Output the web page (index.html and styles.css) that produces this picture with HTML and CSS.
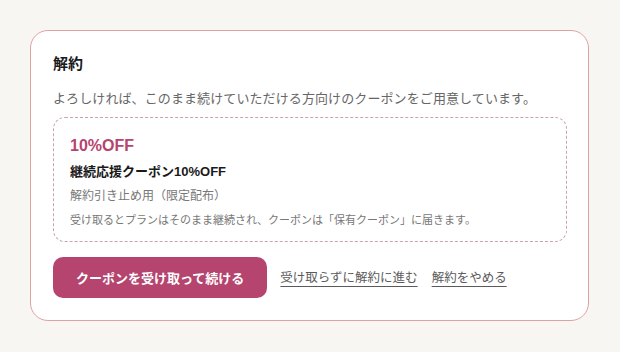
FILE: index.html
```html
<!DOCTYPE html>
<html lang="ja">
<head>
<meta charset="utf-8">
<link rel="stylesheet" href="styles.css">
</head>
<body>
<div class="card">
  <h2 class="title">解約</h2>
  <p class="lead">よろしければ、このまま続けていただける方向けのクーポンをご用意しています。</p>
  <div class="coupon">
    <div class="coupon-off">10%OFF</div>
    <div class="coupon-name">継続応援クーポン10%OFF</div>
    <div class="coupon-sub">解約引き止め用（限定配布）</div>
    <div class="coupon-note">受け取るとプランはそのまま継続され、クーポンは「保有クーポン」に届きます。</div>
  </div>
  <div class="actions">
    <button class="primary">クーポンを受け取って続ける</button>
    <a class="link" href="#">受け取らずに解約に進む</a>
    <a class="link" href="#">解約をやめる</a>
  </div>
</div>
</body>
</html>
```
FILE: styles.css
```css
html, body {
  margin: 0;
  padding: 0;
  background: #f8f6f2;
}
body {
  padding: 30px 31px 30px 30px;
  font-family: "Liberation Sans", "Noto Sans CJK JP", sans-serif;
  color: #222;
}
.card {
  background: #fff;
  border: 1px solid #dea2a2;
  border-radius: 18px;
  padding: 22px 21px 22px 22px;
}
.title {
  margin: 0;
  font-size: 15px;
  line-height: 22px;
  font-weight: 700;
  color: #1a1a1a;
}
.lead {
  margin: 13px 0 0;
  font-size: 13px;
  line-height: 22px;
  color: #666;
  letter-spacing: 0.1px;
}
.coupon {
  margin-top: 7px;
  border: 1px dashed #c9a0b4;
  border-radius: 12px;
  padding: 16px 16px 12px;
}
.coupon-off {
  font-size: 16px;
  line-height: 24px;
  font-weight: 700;
  color: #b5446e;
}
.coupon-name {
  margin-top: 4px;
  font-size: 13px;
  line-height: 20px;
  font-weight: 700;
  color: #1a1a1a;
}
.coupon-sub {
  margin-top: 4px;
  font-size: 12px;
  line-height: 20px;
  color: #777;
}
.coupon-note {
  margin-top: 5px;
  font-size: 11px;
  line-height: 18px;
  color: #777;
}
.actions {
  margin-top: 15px;
  display: flex;
  align-items: center;
}
.primary {
  font-family: inherit;
  background: #b5446e;
  color: #fff;
  border: none;
  border-radius: 10px;
  height: 41px;
  padding: 0 23px;
  font-size: 13px;
  font-weight: 700;
}
.link {
  margin-left: 13px;
  font-size: 12.5px;
  line-height: 20px;
  color: #5a5a5a;
  text-decoration: underline;
  text-underline-offset: 4px;
}
.link + .link {
  margin-left: 14px;
}
```
